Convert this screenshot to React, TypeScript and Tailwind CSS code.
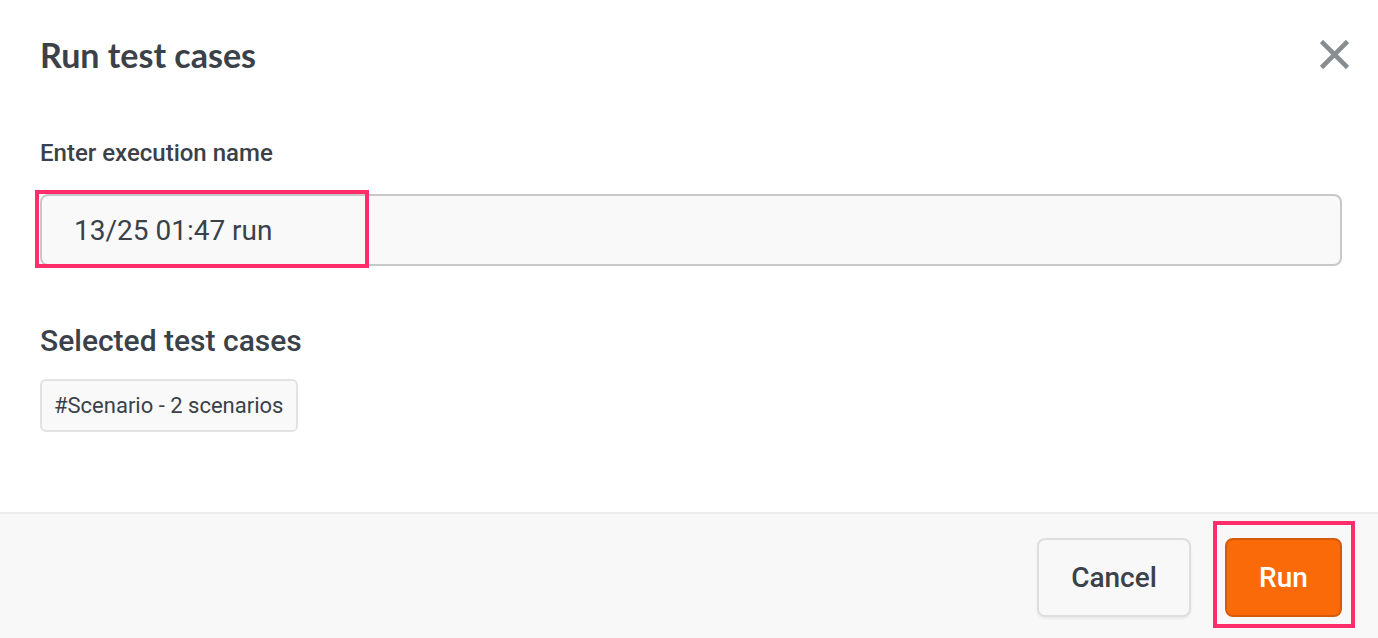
export default function App() {
  return (
    <div className="w-[1378px] h-[638px] bg-white flex flex-col font-['Roboto',sans-serif] text-[#3a4149] overflow-hidden">
      {/* Header */}
      <div className="flex items-start justify-between pl-10 pr-[29px] pt-[35px]">
        <h1 className="font-['Lato',sans-serif] font-bold text-[34px] leading-[40px] text-[#3a4149]">Run test cases</h1>
        <button className="mt-[5px] w-[29px] h-[29px] flex items-center justify-center">
          <svg viewBox="0 0 28 28" className="w-[29px] h-[29px]">
            <path d="M3 3 L25 25 M25 3 L3 25" stroke="#888d91" strokeWidth="4.5" strokeLinecap="square" />
          </svg>
        </button>
      </div>

      {/* Body */}
      <div className="flex-1 px-10 pt-[64px]">
        <label className="block text-[24px] leading-[28px] font-medium">Enter execution name</label>
        <div className="relative mt-[27px] mr-[-4px]">
          <input
            readOnly
            value="13/25 01:47 run"
            className="w-full h-[72px] rounded-[8px] border-2 border-[#c8c8c8] bg-[#f9f9f9] pl-[32px] text-[28px] text-[#3a4149] outline-none"
          />
          <div className="absolute left-[-5px] top-[-4px] w-[334px] h-[78px] border-4 border-[#ff2d6a] pointer-events-none" />
        </div>

        <h2 className="mt-[57px] text-[30px] leading-[36px] font-medium">Selected test cases</h2>
        <div className="mt-[20px] inline-flex items-center h-[53px] pl-[12px] pr-[13px] rounded-[6px] border-2 border-[#e2e2e2] bg-[#f9f9f9] text-[22px]">
          #Scenario - 2 scenarios
        </div>
      </div>

      {/* Footer */}
      <div className="h-[126px] border-t-2 border-[#ececec] bg-[#f8f8f8] flex items-start justify-end gap-[34px] pt-[24px] pr-[36px]">
        <button className="w-[154px] h-[79px] rounded-[8px] border-2 border-[#dedede] bg-[#f8f8f8] shadow-[0_2px_3px_rgba(0,0,0,0.06)] text-[28px] font-medium text-[#3a4149]">
          Cancel
        </button>
        <div className="relative">
          <button className="w-[117px] h-[79px] rounded-[8px] border-2 border-[#d65a0c] bg-[#fb6a09] text-[28px] font-medium text-white">
            Run
          </button>
          <div className="absolute left-[-12px] top-[-17px] w-[142px] h-[107px] border-4 border-[#ff2d6a] pointer-events-none" />
        </div>
      </div>
    </div>
  );
}
